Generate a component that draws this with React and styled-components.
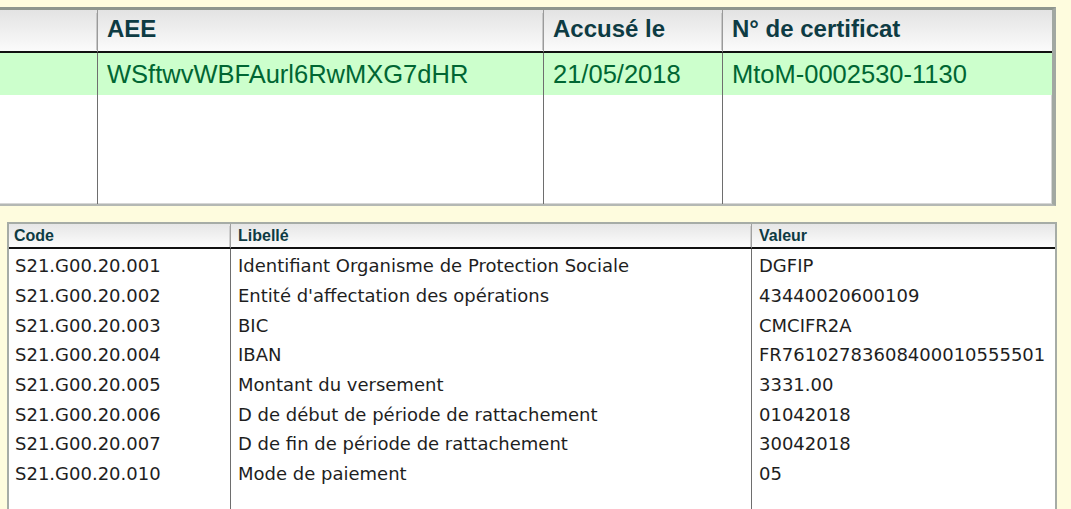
import React from 'react';
import styled, { createGlobalStyle } from 'styled-components';

const GlobalStyle = createGlobalStyle`
  html, body {
    margin: 0;
    padding: 0;
    background: #fefcde;
    overflow: hidden;
  }
`;

const declarations = [
  ['S21.G00.20.001', 'Identifiant Organisme de Protection Sociale', 'DGFIP'],
  ['S21.G00.20.002', "Entité d'affectation des opérations", '43440020600109'],
  ['S21.G00.20.003', 'BIC', 'CMCIFR2A'],
  ['S21.G00.20.004', 'IBAN', 'FR76102783608400010555501'],
  ['S21.G00.20.005', 'Montant du versement', '3331.00'],
  ['S21.G00.20.006', 'D de début de période de rattachement', '01042018'],
  ['S21.G00.20.007', 'D de fin de période de rattachement', '30042018'],
  ['S21.G00.20.010', 'Mode de paiement', '05'],
];

const Page = styled.div`
  width: 1071px;
  height: 509px;
  overflow: hidden;
  padding-top: 7px;
  box-sizing: border-box;
`;

const EnvoiPanel = styled.div`
  margin: 0 15px 0 -20px;
  height: 199px;
  box-sizing: border-box;
  background: #fff;
  border-top: 3px solid #8e968e;
  border-right: 4px solid #a2a8a2;
  border-bottom: 2px solid #b4b8b4;
  box-shadow: inset -1px -1px 0 #d6d6d6;
  display: flex;
  flex-direction: column;
`;

const TopGrid = styled.div`
  display: grid;
  grid-template-columns: 117px 446px 179px 1fr;
`;

const TopHead = styled.div`
  height: 43px;
  box-sizing: border-box;
  padding-bottom: 4px;
  display: flex;
  align-items: center;
  padding-left: ${p => (p.$first ? 0 : 9)}px;
  background: linear-gradient(#e3e3e3, #fbfbfb);
  border-left: ${p => (p.$first ? 'none' : '1px solid #9a9a9a')};
  box-shadow: ${p => (p.$first ? 'none' : '-4px 0 0 -3px #c8c8c8')};
  font: bold 24px "Liberation Sans", Arial, sans-serif;
  color: #0e3b43;
  border-bottom: 2px solid #111;
`;

const TopCell = styled.div`
  height: 42px;
  display: flex;
  align-items: center;
  padding-left: 9px;
  background: #ccffcc;
  border-left: ${p => (p.$first ? 'none' : '1px solid #6e6e6e')};
  font: 25.5px "Liberation Sans", Arial, sans-serif;
  color: #006633;
`;

const TopFiller = styled.div`
  flex: 1;
  display: grid;
  grid-template-columns: 117px 446px 179px 1fr;
  & > div + div {
    border-left: 1px solid #6e6e6e;
  }
`;

const DetailPanel = styled.div`
  margin: 16px 14px 0 7px;
  height: 300px;
  box-sizing: border-box;
  background: #fff;
  border: 2px solid #a6aca6;
  border-bottom: none;
`;

const DetailGrid = styled.div`
  display: grid;
  grid-template-columns: 221px 521px 1fr;
`;

const DetailHead = styled.div`
  height: 23px;
  display: flex;
  align-items: center;
  padding-left: ${p => (p.$first ? 5 : 7)}px;
  background: linear-gradient(#e6e6e6, #fcfcfc);
  border-left: ${p => (p.$first ? 'none' : '1px solid #a0a0a0')};
  box-shadow: ${p => (p.$first ? 'none' : '-3px 0 0 -2px #cfcfcf')};
  border-bottom: 2px solid #111;
  font: bold 16px "Liberation Sans", Arial, sans-serif;
  color: #0e3b43;
`;

const DetailCell = styled.div`
  height: 29.7px;
  display: flex;
  align-items: center;
  padding-left: ${p => (p.$first ? 6 : 7)}px;
  border-left: ${p => (p.$first ? 'none' : '1px solid #6e6e6e')};
  font: 18px "DejaVu Sans", Verdana, sans-serif;
  color: #1e1e1e;
  white-space: nowrap;
  overflow: hidden;
`;

const RuleGap = styled.div`
  grid-column: 1 / -1;
  height: 2px;
  background: linear-gradient(to right, transparent 221px, #6e6e6e 221px, #6e6e6e 222px, transparent 222px, transparent 742px, #6e6e6e 742px, #6e6e6e 743px, transparent 743px);
`;

const DetailFiller = styled.div`
  height: 60px;
  border-left: ${p => (p.$first ? 'none' : '1px solid #6e6e6e')};
`;

export default function App() {
  return (
    <>
      <GlobalStyle />
      <Page>
        <EnvoiPanel>
          <TopGrid>
            <TopHead $first />
            <TopHead>AEE</TopHead>
            <TopHead>Accusé le</TopHead>
            <TopHead>N° de certificat</TopHead>
            <TopCell $first />
            <TopCell>WSftwvWBFAurl6RwMXG7dHR</TopCell>
            <TopCell>21/05/2018</TopCell>
            <TopCell>MtoM-0002530-1130</TopCell>
          </TopGrid>
          <TopFiller>
            <div />
            <div />
            <div />
            <div />
          </TopFiller>
        </EnvoiPanel>
        <DetailPanel>
          <DetailGrid>
            <DetailHead $first>Code</DetailHead>
            <DetailHead>Libellé</DetailHead>
            <DetailHead>Valeur</DetailHead>
            <RuleGap />
            {declarations.map(([code, label, value]) => (
              <React.Fragment key={code}>
                <DetailCell $first>{code}</DetailCell>
                <DetailCell>{label}</DetailCell>
                <DetailCell>{value}</DetailCell>
              </React.Fragment>
            ))}
            <DetailFiller $first />
            <DetailFiller />
            <DetailFiller />
          </DetailGrid>
        </DetailPanel>
      </Page>
    </>
  );
}
